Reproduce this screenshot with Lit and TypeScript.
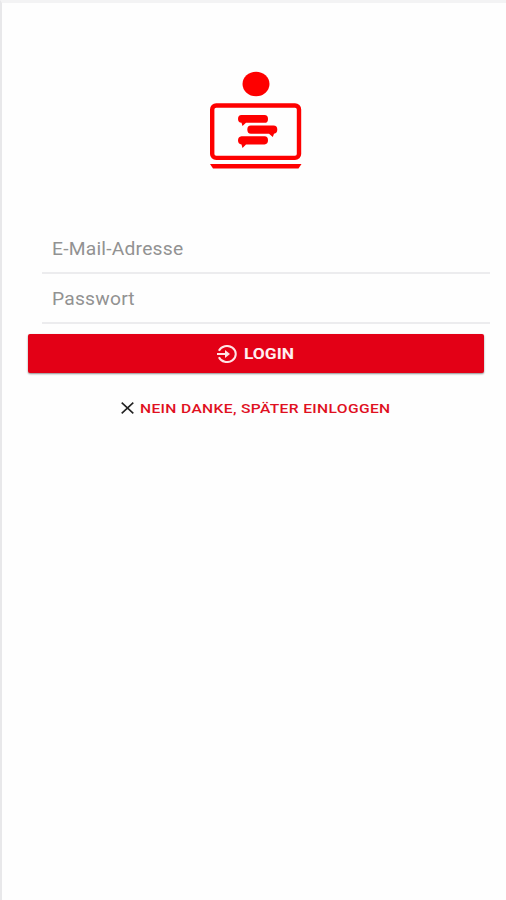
import { LitElement, html, css } from "lit";
import { customElement } from "lit/decorators.js";

@customElement("app-root")
export class AppRoot extends LitElement {
  static styles = css`
    :host {
      display: block;
      box-sizing: border-box;
      height: 900px;
      overflow: hidden;
      border-top: 3px solid #f3f3f4;
      border-left: 2px solid #e8e8ea;
      background: #fefefe;
      font-family: Roboto, "Liberation Sans", sans-serif;
    }
    .logo {
      display: block;
      width: 96px;
      height: 102px;
      margin: 67px 0 0 206px;
      fill: #fe0000;
    }
    .form {
      display: flex;
      flex-direction: column;
      margin: 53px 16px 0 40px;
    }
    .field {
      box-sizing: border-box;
      height: 49px;
      padding-left: 9.5px;
      border-bottom: 2px solid #ececee;
      font-size: 17.5px;
      line-height: 49px;
      letter-spacing: 0.2px;
      color: #929292;
    }
    .field + .field { height: 50px; }
    .wide {
      display: inline-block;
      transform: scaleX(1.1);
      transform-origin: left center;
      white-space: nowrap;
    }
    .field + .field .wide { line-height: 50px; }
    .login {
      display: flex;
      align-items: center;
      gap: 7px;
      box-sizing: border-box;
      height: 39px;
      margin: 10px 22px 0 26px;
      padding-left: 189px;
      border-radius: 2px;
      background: #e30016;
      box-shadow: 0 1px 2px rgba(0, 0, 0, 0.45);
      color: #ffeff0;
      font-size: 15.5px;
      font-weight: 700;
    }
    .login .wide { transform: scaleX(1.12); }
    .enter {
      width: 20px;
      height: 18px;
      fill: none;
      stroke: #ffe4e6;
      stroke-width: 2;
    }
    .later {
      display: flex;
      align-items: center;
      gap: 6px;
      height: 30px;
      margin: 20px 0 0 119px;
      color: #e0101f;
      font-size: 13.5px;
      font-weight: 500;
      letter-spacing: 0.3px;
      white-space: nowrap;
    }
    .later .wide { transform: scaleX(1.157); }
    .close {
      width: 13px;
      height: 12px;
      stroke: #222;
      stroke-width: 1.6;
    }
  `;

  render() {
    return html`
      <svg class="logo" viewBox="208 70 96 102">
        <ellipse cx="256" cy="84" rx="13.5" ry="12.2" />
        <rect x="212.2" y="105.5" width="86.8" height="52.4" rx="4" fill="none" stroke="#fe0000" stroke-width="4.4" />
        <path d="M210 164H301.5L298.5 168.6H213Z" />
        <path d="M241.5 115H264.5Q268 115 268 118.9T264.5 122.8H246L242.5 126L241.5 122.8Q238 122.5 238 118.9T241.5 115Z" />
        <path d="M251 125.5H273.5Q277.3 125.5 277.3 129.6T274 133.7L272.8 137L269 133.8H251Q247.3 133.8 247.3 129.6T251 125.5Z" />
        <path d="M241.5 136.2H264.5Q268 136.2 268 140.3T264.5 144.4H246L242.5 148L241.5 144.4Q238 144 238 140.3T241.5 136.2Z" />
      </svg>
      <div class="form">
        <div class="field"><span class="wide">E-Mail-Adresse</span></div>
        <div class="field"><span class="wide">Passwort</span></div>
      </div>
      <div class="login">
        <svg class="enter" viewBox="0 0 20 18">
          <path d="M1.9 5.8A8.8 8 0 1 1 1.9 12.2M0 9H11" />
          <path d="M8 5L13 9L8 13Z" fill="#ffe4e6" stroke="none" />
        </svg>
        <span class="wide">LOGIN</span>
      </div>
      <div class="later">
        <svg class="close" viewBox="0 0 13 12"><path d="M.7 .7L12.3 11.3M12.3 .7L.7 11.3" /></svg>
        <span class="wide">NEIN DANKE, SPÄTER EINLOGGEN</span>
      </div>
    `;
  }
}
